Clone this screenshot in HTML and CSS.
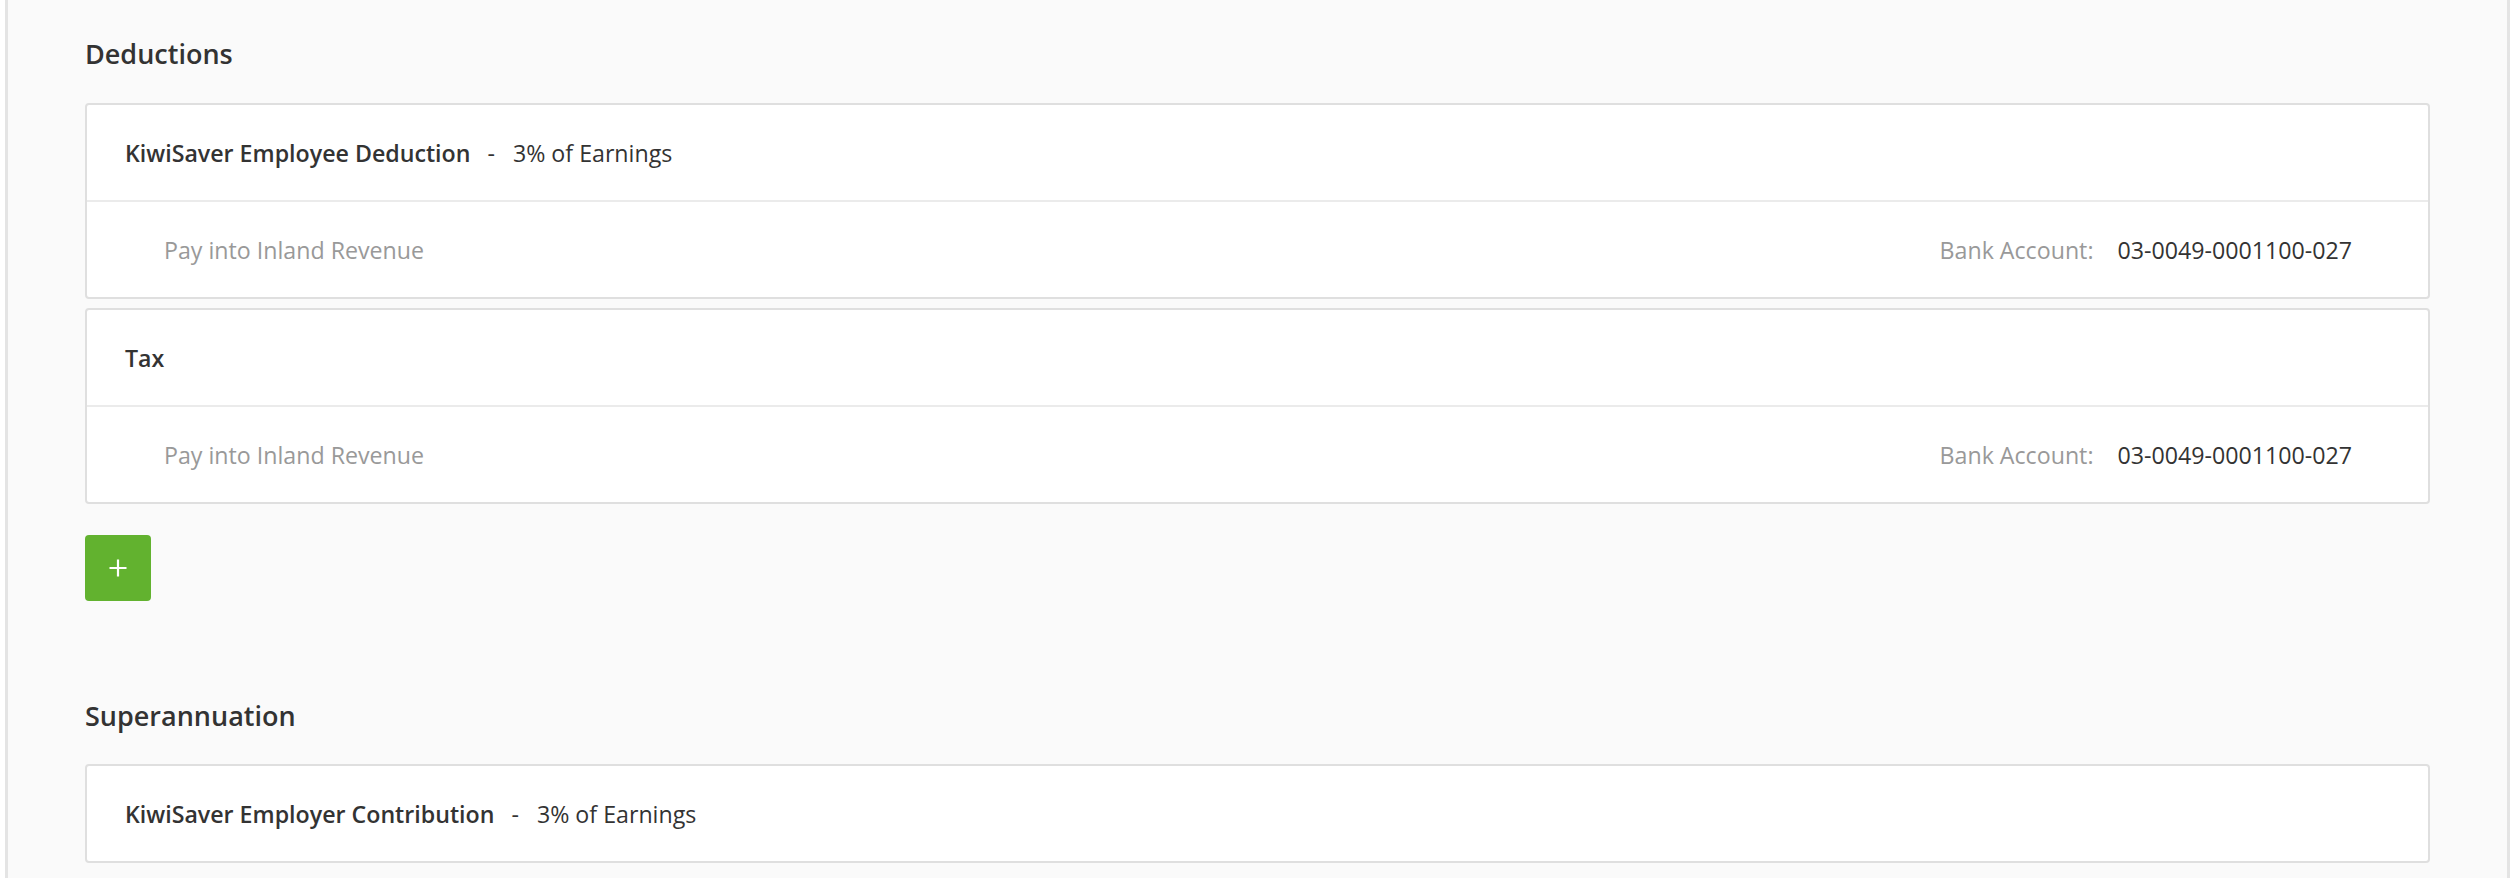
FILE: index.html
```html
<!DOCTYPE html>
<html lang="en">
<head>
<meta charset="utf-8">
<title>Deductions</title>
<link rel="stylesheet" href="styles.css">
</head>
<body>
<div class="panel">
  <h2 class="section-title">Deductions</h2>
  <div class="card-list">
    <div class="card">
      <div class="card-row card-head">
        <span class="item-name">KiwiSaver Employee Deduction</span>
        <span class="sep">-</span>
        <span class="item-rate">3% of Earnings</span>
      </div>
      <div class="card-row card-body">
        <span class="pay-into">Pay into Inland Revenue</span>
        <span class="bank">
          <span class="bank-label">Bank Account:</span>
          <span class="bank-value">03-0049-0001100-027</span>
        </span>
      </div>
    </div>
    <div class="card">
      <div class="card-row card-head">
        <span class="item-name">Tax</span>
      </div>
      <div class="card-row card-body">
        <span class="pay-into">Pay into Inland Revenue</span>
        <span class="bank">
          <span class="bank-label">Bank Account:</span>
          <span class="bank-value">03-0049-0001100-027</span>
        </span>
      </div>
    </div>
  </div>
  <button class="add-btn" type="button" aria-label="Add">
    <svg width="18" height="18" viewBox="0 0 18 18"><path d="M9 0.5V17.5M0.5 9H17.5" stroke="#ffffff" stroke-width="2.2" fill="none"/></svg>
  </button>

  <h2 class="section-title section-title-2">Superannuation</h2>
  <div class="card-list">
    <div class="card">
      <div class="card-row card-head">
        <span class="item-name">KiwiSaver Employer Contribution</span>
        <span class="sep">-</span>
        <span class="item-rate">3% of Earnings</span>
      </div>
    </div>
  </div>
</div>
</body>
</html>
```

FILE: styles.css
```css
html, body {
  margin: 0;
  padding: 0;
  background: #ffffff;
}

body {
  font-family: "Open Sans", "Liberation Sans", sans-serif;
  color: #333333;
  overflow: hidden;
  height: 878px;
}

.panel {
  margin-left: 5px;
  width: 2345px;
  min-height: 878px;
  padding: 36px 77px 0 77px;
  background: #fafafa;
  border-left: 3px solid #e4e4e4;
  border-right: 3px solid #e4e4e4;
}

.section-title {
  margin: 0 0 31px 0;
  font-size: 27px;
  line-height: 36px;
  font-weight: 600;
  color: #333333;
}

.section-title-2 {
  margin-top: 97px;
  margin-bottom: 30px;
}

.card-list {
  display: flex;
  flex-direction: column;
  gap: 9px;
}

.card {
  background: #ffffff;
  border: 2px solid #dfdfdf;
  border-radius: 4px;
}

.card-row {
  height: 95px;
  display: flex;
  align-items: center;
  font-size: 23.2px;
  line-height: 32px;
}

.card-head {
  padding: 0 38px;
}

.card-body {
  border-top: 2px solid #ebebeb;
  padding: 0 76px 0 77px;
  justify-content: space-between;
}

.item-name {
  font-weight: 600;
  color: #333333;
}

.sep {
  margin: 0 18px 0 17px;
  color: #333333;
}

.item-rate {
  color: #333333;
}

.pay-into {
  color: #999999;
}

.bank {
  display: flex;
  align-items: center;
}

.bank-label {
  color: #999999;
  margin-right: 24px;
}

.bank-value {
  color: #333333;
}

.add-btn {
  display: flex;
  align-items: center;
  justify-content: center;
  margin-top: 31px;
  width: 66px;
  height: 66px;
  padding: 0;
  border: none;
  border-radius: 4px;
  background: #62b22f;
  cursor: pointer;
}

.add-btn svg {
  display: block;
}
```
